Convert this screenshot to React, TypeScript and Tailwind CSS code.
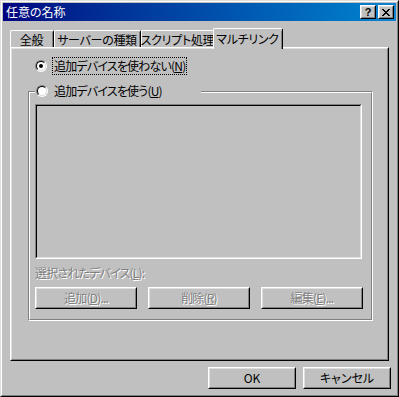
import React from 'react';

const raised =
  'border border-t-white border-l-white border-r-black border-b-black';
const raisedInner =
  'border border-t-[#dfdfdf] border-l-[#dfdfdf] border-r-[#808080] border-b-[#808080]';

const Radio: React.FC<{ checked?: boolean }> = ({ checked }) => (
  <div className="w-[12px] h-[12px] rounded-full border border-t-[#808080] border-l-[#808080] border-r-white border-b-white shrink-0">
    <div className="w-full h-full rounded-full border border-t-black border-l-black border-r-[#dfdfdf] border-b-[#dfdfdf] bg-white flex items-center justify-center">
      {checked && <div className="w-[4px] h-[4px] rounded-full bg-black" />}
    </div>
  </div>
);

const Button: React.FC<{ w: string; disabled?: boolean; children: React.ReactNode }> = ({
  w,
  disabled,
  children,
}) => (
  <div className={`${w} h-[22px] ${raised}`}>
    <div
      className={`w-full h-full ${raisedInner} flex items-center justify-center whitespace-nowrap ${
        disabled ? 'text-[#808080] [text-shadow:1px_1px_0_#fff]' : 'text-black'
      }`}
    >
      {children}
    </div>
  </div>
);

const Tab: React.FC<{ w: string; active?: boolean; children: React.ReactNode }> = ({
  w,
  active,
  children,
}) => (
  <div
    className={`${w} ${
      active ? 'h-[21px] -mx-[2px] -mb-[2px] relative z-10 pt-[2px]' : 'h-[17px] pt-[1px]'
    } bg-[#c0c0c0] border-l border-t border-r border-t-white border-l-white border-r-black rounded-t-[2px] flex justify-center`}
  >
    <div className="w-full h-full border-r border-r-[#808080] flex justify-center whitespace-nowrap tracking-[-0.3px]">
      {children}
    </div>
  </div>
);

export default function App() {
  return (
    <div className="w-[399px] h-[397px] bg-[#c0c0c0] border border-t-[#dfdfdf] border-l-[#dfdfdf] border-r-black border-b-black font-['Noto_Sans_CJK_JP','Liberation_Sans',sans-serif] text-[12px] leading-[16px] text-black [font-feature-settings:'palt']">
      <div className="w-full h-full border border-t-white border-l-white border-r-[#808080] border-b-[#808080] p-[1px] flex flex-col">
        {/* Title bar */}
        <div className="h-[18px] bg-gradient-to-r from-[#000080] to-[#1084d0] flex items-center pl-[3px] pr-[2px]">
          <span className="text-white text-[12px] leading-[18px]">任意の名称</span>
          <div className="ml-auto flex gap-[2px]">
            <div className={`w-[16px] h-[14px] ${raised} bg-[#c0c0c0]`}>
              <div className={`w-full h-full ${raisedInner} flex items-center justify-center font-['Liberation_Sans',sans-serif] font-bold text-[11px] leading-none`}>
                ?
              </div>
            </div>
            <div className={`w-[16px] h-[14px] ${raised} bg-[#c0c0c0]`}>
              <div className={`w-full h-full ${raisedInner} flex items-center justify-center`}>
                <svg width="8" height="7" viewBox="0 0 8 7" shapeRendering="crispEdges">
                  <path d="M0 0h2v1h1v1h2V1h1V0h2v1H7v1H6v1H5v1h1v1h1v1h1v1H6V6H5V5H3v1H2v1H0V6h1V5h1V4h1V3H2V2H1V1H0z" fill="#000" />
                </svg>
              </div>
            </div>
          </div>
        </div>

        {/* Tabs */}
        <div className="ml-[7px] mt-[7px] h-[19px] flex items-end">
          <Tab w="w-[44px]">全般</Tab>
          <Tab w="w-[87px]">サーバーの種類</Tab>
          <Tab w="w-[74px]">スクリプト処理</Tab>
          <Tab w="w-[70px]" active>
            マルチリンク
          </Tab>
        </div>

        {/* Panel */}
        <div className={`ml-[7px] w-[379px] h-[314px] ${raised}`}>
          <div className="w-full h-full border border-t-[#dfdfdf] border-l-[#dfdfdf] border-r-[#808080] border-b-[#808080] flex flex-col tracking-[-0.8px]">
            <div className="mt-[8px] ml-[23px] h-[18px] flex items-center">
              <Radio checked />
              <span className="ml-[5px] border border-dotted border-black px-[1px] leading-[16px]">
                追加デバイスを使わない(<span className="underline">N</span>)
              </span>
            </div>

            {/* Group box */}
            <div className="relative mt-[16px] ml-[16px] w-[345px] h-[230px] border border-t-[#808080] border-l-[#808080] border-r-white border-b-white">
              <div className="w-full h-full border border-t-white border-l-white border-r-[#808080] border-b-[#808080] flex flex-col pl-[5px]">
                <div className="mt-[11px] w-[327px] h-[155px] border border-t-[#808080] border-l-[#808080] border-r-white border-b-white">
                  <div className="w-full h-full border border-t-black border-l-black border-r-[#dfdfdf] border-b-[#dfdfdf] bg-[#c0c0c0]" />
                </div>
                <div className="mt-[8px] h-[12px] leading-[12px] text-[#808080] [text-shadow:1px_1px_0_#fff]">
                  選択されたデバイス(<span className="underline">L</span>):
                </div>
                <div className="mt-[8px] flex gap-[11px]">
                  <Button w="w-[102px]" disabled>
                    追加(<span className="underline">D</span>)...
                  </Button>
                  <Button w="w-[102px]" disabled>
                    削除(<span className="underline">R</span>)
                  </Button>
                  <Button w="w-[102px]" disabled>
                    編集(<span className="underline">E</span>)...
                  </Button>
                </div>
              </div>

              {/* Legend radio over the frame */}
              <div className="absolute -top-[9px] left-[6px] w-[166px] h-[16px] bg-[#c0c0c0] flex items-center pl-[1px]">
                <Radio />
                <span className="ml-[6px]">
                  追加デバイスを使う(<span className="underline">U</span>)
                </span>
              </div>
            </div>
          </div>
        </div>

        {/* Bottom buttons */}
        <div className="mt-[6px] flex justify-end gap-[7px] pr-[5px]">
          <Button w="w-[88px]">OK</Button>
          <Button w="w-[88px]">キャンセル</Button>
        </div>
      </div>
    </div>
  );
}
